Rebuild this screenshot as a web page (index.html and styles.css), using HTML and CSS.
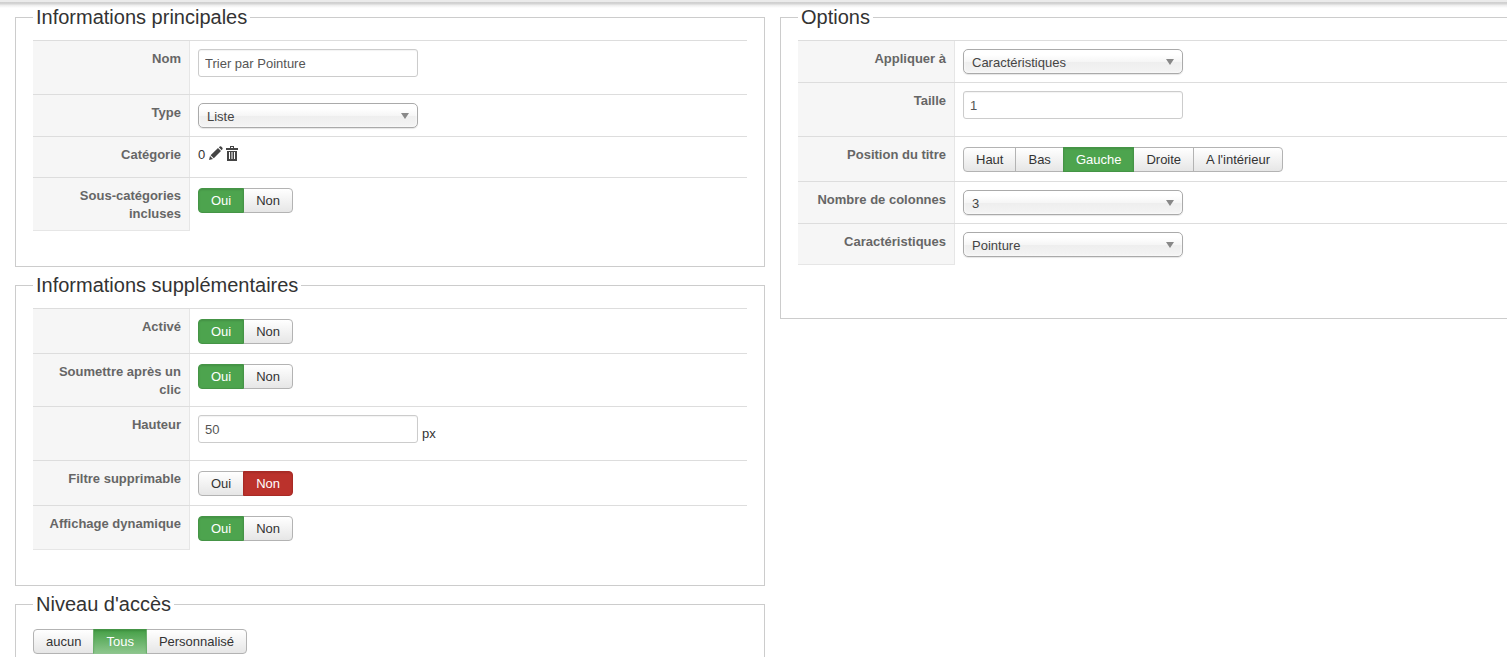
FILE: index.html
```html
<!DOCTYPE html>
<html lang="fr">

<head>
  <meta charset="UTF-8">
  <meta name="viewport" content="width=device-width, initial-scale=1.0">
  <title>Filtre</title>
  <link rel="stylesheet" href="styles.css">
</head>

<body>
  <div class="topbar"></div>

  <form class="layout">
    <div class="col">
      <fieldset class="panel">
        <legend>Informations principales</legend>
        <div class="row">
          <div class="key"><label for="name">Nom</label></div>
          <div class="field"><input class="text" type="text" id="name" value="Trier par Pointure"></div>
        </div>
        <div class="row">
          <div class="key"><label for="type">Type</label></div>
          <div class="field">
            <div class="select"><select id="type"><option>Liste</option></select></div>
          </div>
        </div>
        <div class="row">
          <div class="key">Catégorie</div>
          <div class="field category">
            <span>0</span>
            <button type="button" class="icon" aria-label="Modifier">
              <svg width="14" height="14" viewBox="0 0 14 14">
                <path d="M0 14 L1 10 L4 13 Z M1.6 9.2 L9 2 L12 5 L4.8 12.3 Z M9.8 1.3 L10.8 0.4 Q11.5 0 12.2 0.6 L13.4 1.8 Q14 2.5 13.4 3.3 L12.7 4.2 Z" />
              </svg>
            </button>
            <button type="button" class="icon" aria-label="Supprimer">
              <svg width="12" height="15" viewBox="0 0 12 15">
                <path fill-rule="evenodd" d="M4 0 H8 V2 H12 V4 H0 V2 H4 Z M5 1 V2 H7 V1 Z M1 5 H11 V15 H1 Z M3 6 V13 H4 V6 Z M5.5 6 V13 H6.5 V6 Z M8 6 V13 H9 V6 Z" />
              </svg>
            </button>
          </div>
        </div>
        <div class="row">
          <div class="key" id="k-sub">Sous-catégories incluses</div>
          <div class="field">
            <div class="btn-group" role="radiogroup" aria-labelledby="k-sub">
              <input type="radio" name="sub" id="sub1" checked><label for="sub1">Oui</label>
              <input type="radio" name="sub" id="sub0"><label for="sub0">Non</label>
            </div>
          </div>
        </div>
      </fieldset>

      <fieldset class="panel">
        <legend>Informations supplémentaires</legend>
        <div class="row">
          <div class="key" id="k-active">Activé</div>
          <div class="field">
            <div class="btn-group" role="radiogroup" aria-labelledby="k-active">
              <input type="radio" name="active" id="active1" checked><label for="active1">Oui</label>
              <input type="radio" name="active" id="active0"><label for="active0">Non</label>
            </div>
          </div>
        </div>
        <div class="row">
          <div class="key" id="k-submit">Soumettre après un clic</div>
          <div class="field">
            <div class="btn-group" role="radiogroup" aria-labelledby="k-submit">
              <input type="radio" name="submit" id="submit1" checked><label for="submit1">Oui</label>
              <input type="radio" name="submit" id="submit0"><label for="submit0">Non</label>
            </div>
          </div>
        </div>
        <div class="row">
          <div class="key"><label for="height">Hauteur</label></div>
          <div class="field unit"><input class="text" type="text" id="height" value="50"><span>px</span></div>
        </div>
        <div class="row">
          <div class="key" id="k-del">Filtre supprimable</div>
          <div class="field">
            <div class="btn-group" role="radiogroup" aria-labelledby="k-del">
              <input type="radio" name="del" id="del1"><label for="del1">Oui</label>
              <input type="radio" name="del" id="del0" class="no" checked><label for="del0">Non</label>
            </div>
          </div>
        </div>
        <div class="row">
          <div class="key" id="k-dyn">Affichage dynamique</div>
          <div class="field">
            <div class="btn-group" role="radiogroup" aria-labelledby="k-dyn">
              <input type="radio" name="dyn" id="dyn1" checked><label for="dyn1">Oui</label>
              <input type="radio" name="dyn" id="dyn0"><label for="dyn0">Non</label>
            </div>
          </div>
        </div>
      </fieldset>

      <fieldset class="panel">
        <legend>Niveau d'accès</legend>
        <div class="btn-group">
          <input type="radio" name="access" id="access0"><label for="access0">aucun</label>
          <input type="radio" name="access" id="access1" class="all" checked><label for="access1">Tous</label>
          <input type="radio" name="access" id="access2"><label for="access2">Personnalisé</label>
        </div>
      </fieldset>
    </div>

    <div class="col">
      <fieldset class="panel options">
        <legend>Options</legend>
        <div class="row">
          <div class="key"><label for="apply">Appliquer à</label></div>
          <div class="field">
            <div class="select"><select id="apply"><option>Caractéristiques</option></select></div>
          </div>
        </div>
        <div class="row">
          <div class="key"><label for="size">Taille</label></div>
          <div class="field"><input class="text" type="text" id="size" value="1"></div>
        </div>
        <div class="row">
          <div class="key" id="k-pos">Position du titre</div>
          <div class="field">
            <div class="btn-group" role="radiogroup" aria-labelledby="k-pos">
              <input type="radio" name="pos" id="pos1"><label for="pos1">Haut</label>
              <input type="radio" name="pos" id="pos2"><label for="pos2">Bas</label>
              <input type="radio" name="pos" id="pos3" checked><label for="pos3">Gauche</label>
              <input type="radio" name="pos" id="pos4"><label for="pos4">Droite</label>
              <input type="radio" name="pos" id="pos5"><label for="pos5">A l'intérieur</label>
            </div>
          </div>
        </div>
        <div class="row">
          <div class="key"><label for="columns">Nombre de colonnes</label></div>
          <div class="field">
            <div class="select"><select id="columns"><option>3</option></select></div>
          </div>
        </div>
        <div class="row">
          <div class="key"><label for="feature">Caractéristiques</label></div>
          <div class="field">
            <div class="select"><select id="feature"><option>Pointure</option></select></div>
          </div>
        </div>
      </fieldset>
    </div>
  </form>
</body>

</html>
```

FILE: styles.css
```css
:root {
  --green: #4da44e;
  --red: #bb322c;
  --line: #ddd;
}

* {
  box-sizing: border-box;
}

body {
  margin: 0;
  overflow-x: hidden;
  background: #fff;
  color: #333;
  font: 13px/18px "Liberation Sans", Arial, sans-serif;
}

input,
select,
button {
  margin: 0;
  font: inherit;
}

.topbar {
  height: 8px;
  background: linear-gradient(#ebebeb 2px, #cfcfcf 2px, #d6d6d6 4px, #ececec 5px, #fff 8px);
}

/* the two columns are a little wider than the window */
.layout {
  display: grid;
  grid-template-columns: 1fr 1fr;
  gap: 15px;
  align-items: start;
  margin: 0 -23px 0 15px;
}

.panel {
  min-width: 0;
  margin: 0 0 9px;
  padding: 14px 17px 35px;
  border: 1px solid #ccc;
}

.options {
  padding-bottom: 53px;
}

.panel legend {
  padding: 0 3px;
  font-size: 20px;
  line-height: 18px;
}

.row {
  display: flex;
  border-top: 1px solid var(--line);
}

.key {
  flex: none;
  width: 157px;
  padding: 9px 8px 7px;
  border-right: 1px solid #e6e6e6;
  background: #f6f6f6;
  color: #666;
  font-weight: bold;
  text-align: right;
}

.row:last-child .key {
  border-bottom: 1px solid #e6e6e6;
}

.field {
  flex: 1;
  padding: 8px;
}

.text {
  display: block;
  width: 220px;
  height: 28px;
  margin-bottom: 9px;
  padding: 4px 6px;
  border: 1px solid #ccc;
  border-radius: 3px;
  box-shadow: inset 0 1px 1px rgba(0, 0, 0, .05);
  color: #555;
}

.unit {
  display: flex;
  align-items: center;
  gap: 4px;
}

.select {
  position: relative;
  width: 220px;
}

.select select {
  display: block;
  width: 100%;
  height: 25px;
  padding: 3px 26px 0 8px;
  appearance: none;
  border: 1px solid #aaa;
  border-radius: 5px;
  background: linear-gradient(#fff 20%, #f6f6f6 50%, #eee 52%, #f4f4f4 100%);
  box-shadow: inset 0 0 3px #fff, 0 1px 1px rgba(0, 0, 0, .1);
  color: #444;
}

.select::after {
  content: "";
  position: absolute;
  top: 10px;
  right: 9px;
  border: 4px solid transparent;
  border-top: 6px solid #888;
  border-bottom: 0;
  pointer-events: none;
}

.category {
  display: flex;
  gap: 3px;
  height: 40px;
  padding-top: 9px;
}

.category span {
  margin-right: 1px;
}

.icon {
  display: flex;
  align-self: flex-start;
  padding: 0;
  border: 0;
  background: none;
}

.icon svg {
  fill: #444;
}

.btn-group {
  display: flex;
  position: relative;
  padding: 2px 0 1px;
}

.btn-group input {
  position: absolute;
  opacity: 0;
}

.btn-group label {
  padding: 3px 12px;
  border: 1px solid #b3b3b3;
  background: linear-gradient(#fff, #e6e6e6);
  line-height: 17px;
}

.btn-group label + input + label {
  margin-left: -1px;
}

.btn-group label:first-of-type {
  border-radius: 4px 0 0 4px;
}

.btn-group label:last-of-type {
  border-radius: 0 4px 4px 0;
}

.btn-group input:checked + label {
  z-index: 1;
  border-color: #459446;
  background: var(--green);
  box-shadow: inset 0 1px 2px rgba(0, 0, 0, .12);
  color: #fff;
}

.btn-group .no:checked + label {
  border-color: #a82a25;
  background: var(--red);
}

.btn-group .all:checked + label {
  border-color: #459446 #6cb06d #8fc48f;
  background: linear-gradient(#46a047, #8cc68c);
}
```
